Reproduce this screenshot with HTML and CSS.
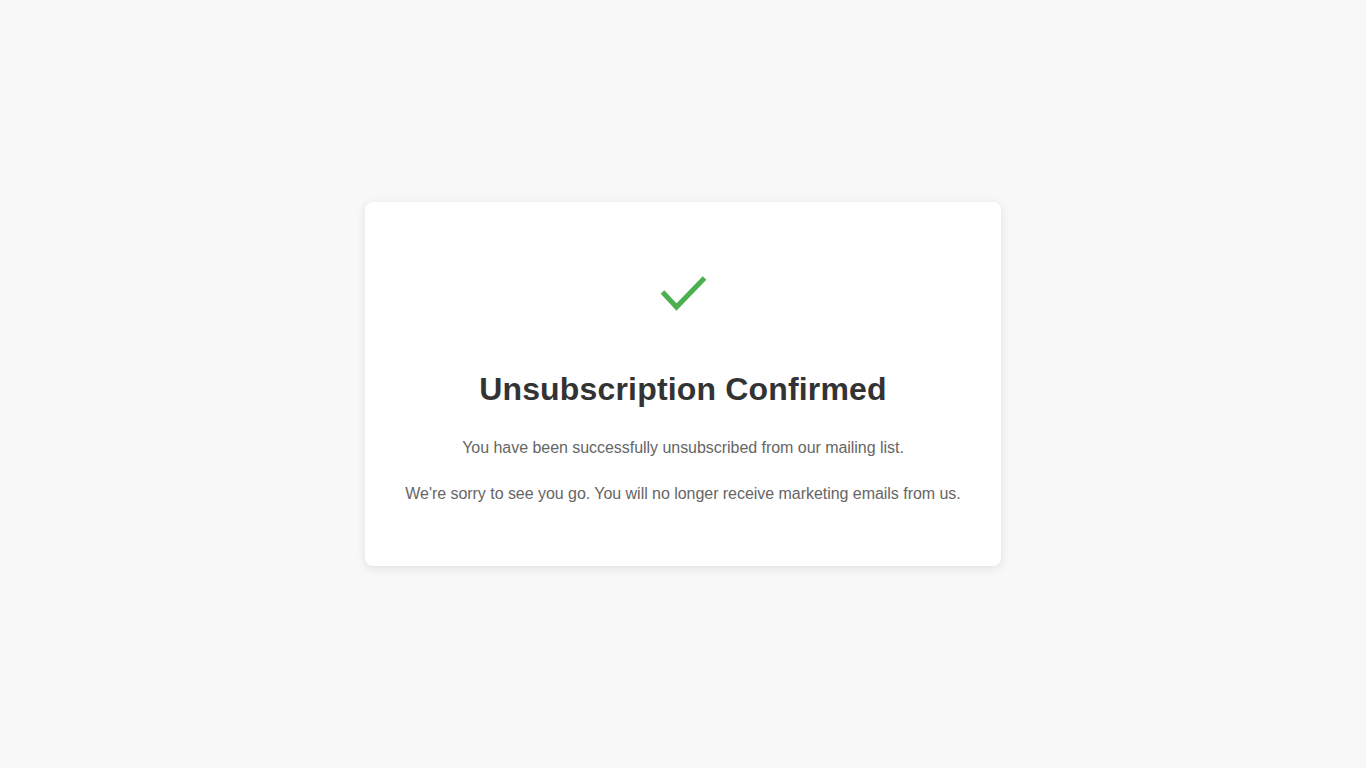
FILE: index.html
```html
<!DOCTYPE html>
<html lang="en">
  <head>
    <meta charset="UTF-8" />
    <meta name="viewport" content="width=device-width, initial-scale=1.0" />
    <title>Unsubscription Confirmed</title>
    <link rel="stylesheet" href="styles.css">
  </head>
  <body>
    <div class="card">
      <svg class="check-icon" width="48" height="48" viewBox="0 0 48 48">
        <polyline points="3.5,22 17.5,37 45.5,8" fill="none" stroke="#4caf50" stroke-width="5" />
      </svg>
      <h1>Unsubscription Confirmed</h1>
      <p>You have been successfully unsubscribed from our mailing list.</p>
      <p>We're sorry to see you go. You will no longer receive marketing emails from us.</p>
    </div>
  </body>
</html>
```

FILE: styles.css
```css
body {
  font-family: 'Liberation Sans', Arial, sans-serif;
  background-color: #f8f8f8;
  margin: 0;
  min-height: 100vh;
  display: flex;
  align-items: center;
  justify-content: center;
}

.card {
  background-color: white;
  border-radius: 8px;
  padding: 40px;
  box-shadow: 0 2px 10px rgba(0, 0, 0, 0.1);
  text-align: center;
}

.check-icon {
  display: block;
  margin: 28px auto 46px;
}

h1 {
  color: #333;
  font-size: 32px;
  line-height: 1.6;
  letter-spacing: 0.17px;
  margin: 0 0 19px;
}

p {
  color: #666;
  font-size: 16px;
  line-height: 1.6;
  letter-spacing: -0.04px;
  margin: 20px 0;
}
```
